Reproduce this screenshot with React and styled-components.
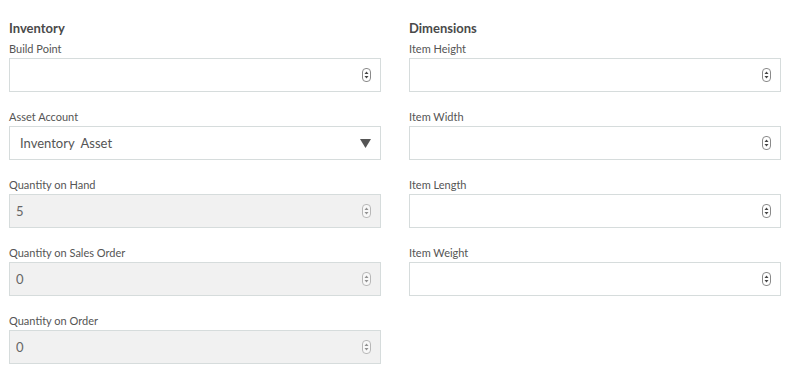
import styled, { createGlobalStyle } from 'styled-components';

const GlobalStyle = createGlobalStyle`
  body {
    margin: 0;
    background: #fff;
    font-family: Lato, "Open Sans", "Liberation Sans", sans-serif;
    color: #555;
  }
`;

const Page = styled.div`
  display: grid;
  grid-template-columns: 372px 372px;
  column-gap: 28px;
  padding: 20px 0 0 9px;
`;

const Column = styled.section`
  display: flex;
  flex-direction: column;
`;

const Heading = styled.h3`
  margin: 0 0 6px;
  font-size: 13px;
  line-height: 16px;
  font-weight: 700;
  color: #4a4a4a;
`;

const Field = styled.div`
  display: flex;
  flex-direction: column;
  gap: 2px;
  margin-bottom: 18px;
`;

const Label = styled.label`
  font-size: 11px;
  line-height: 14px;
  color: #555;
`;

const Box = styled.div`
  box-sizing: border-box;
  height: 34px;
  display: flex;
  align-items: center;
  border: 1px solid #d6dcdc;
  background: ${props => (props.disabled ? '#f1f1f1' : '#fff')};
  padding: 0 9px 0 ${props => (props.select ? '10px' : '6px')};
`;

const Input = styled.input`
  flex: 1;
  min-width: 0;
  border: none;
  outline: none;
  background: transparent;
  padding: 0;
  font-family: inherit;
  font-size: 13px;
  color: ${props => (props.disabled ? '#666' : '#555')};
`;

const SelectText = styled.span`
  flex: 1;
  font-size: 13px;
  color: #555;
  white-space: pre;
`;

const Spinner = ({ faded }) => (
  <svg width="9" height="14" viewBox="0 0 9 14" style={{ opacity: faded ? 0.55 : 1 }}>
    <rect x="0.5" y="0.5" width="8" height="13" rx="3.5" fill="#fff" stroke="#8a8a8a" />
    <path d="M4.5 3.5 L6.5 6 L2.5 6 Z" fill="#444" />
    <path d="M4.5 10.5 L6.5 8 L2.5 8 Z" fill="#444" />
  </svg>
);

const Caret = () => (
  <svg width="11" height="9" viewBox="0 0 11 9">
    <path d="M0 0 L11 0 L5.5 9 Z" fill="#555" />
  </svg>
);

const NumberField = ({ label, value, disabled }) => (
  <Field>
    <Label>{label}</Label>
    <Box disabled={disabled}>
      <Input type="text" defaultValue={value} disabled={disabled} />
      <Spinner faded={disabled} />
    </Box>
  </Field>
);

const App = () => {
  return (
    <>
      <GlobalStyle />
      <Page>
        <Column>
          <Heading>Inventory</Heading>
          <NumberField label="Build Point" value="" />
          <Field>
            <Label>Asset Account</Label>
            <Box select>
              <SelectText>Inventory  Asset</SelectText>
              <Caret />
            </Box>
          </Field>
          <NumberField label="Quantity on Hand" value="5" disabled />
          <NumberField label="Quantity on Sales Order" value="0" disabled />
          <NumberField label="Quantity on Order" value="0" disabled />
        </Column>
        <Column>
          <Heading>Dimensions</Heading>
          <NumberField label="Item Height" value="" />
          <NumberField label="Item Width" value="" />
          <NumberField label="Item Length" value="" />
          <NumberField label="Item Weight" value="" />
        </Column>
      </Page>
    </>
  );
};

export default App;
